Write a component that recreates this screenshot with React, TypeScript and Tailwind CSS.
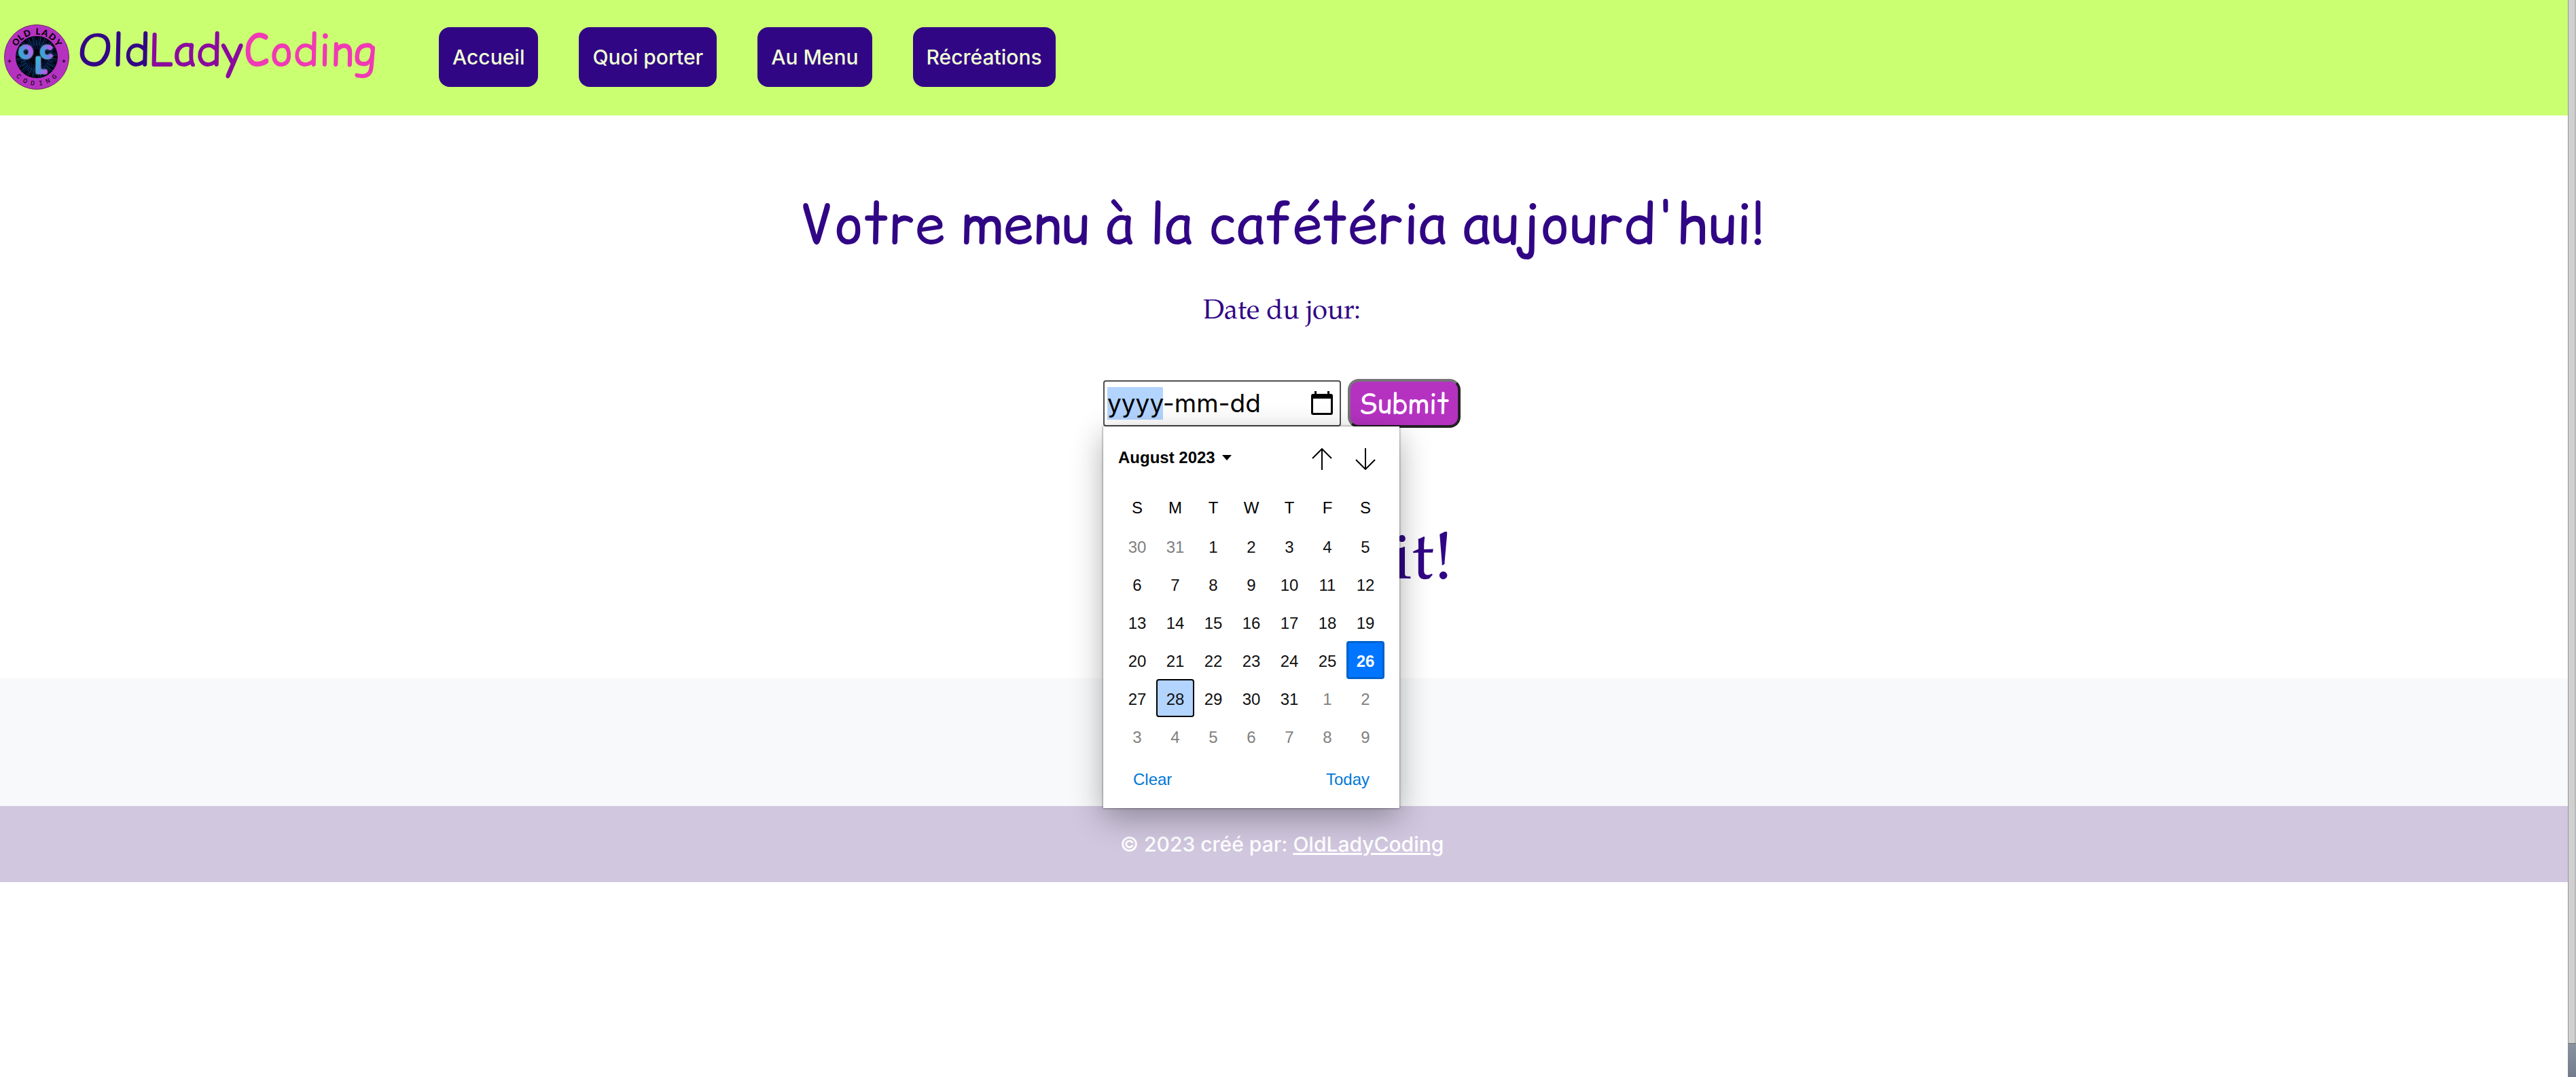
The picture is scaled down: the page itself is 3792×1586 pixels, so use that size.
import { useEffect, useRef } from "react";

const navItems = ["Accueil", "Quoi porter", "Au Menu", "Récréations"];
const weekdays = ["S", "M", "T", "W", "T", "F", "S"];
const weeks = [
  [30, 31, 1, 2, 3, 4, 5],
  [6, 7, 8, 9, 10, 11, 12],
  [13, 14, 15, 16, 17, 18, 19],
  [20, 21, 22, 23, 24, 25, 26],
  [27, 28, 29, 30, 31, 1, 2],
  [3, 4, 5, 6, 7, 8, 9],
];
const rays = Array.from({ length: 60 }, (_, i) => i * 6);

// Glyph origins for text set round the badge: one angle (from vertical) and half-width per letter.
function ring(angles: number[], halfWidths: number[], radius: number, bottom: boolean) {
  const points = angles.map((deg, i) => {
    const a = (deg * Math.PI) / 180;
    const side = bottom ? -1 : 1;
    const rot = bottom ? -a : a;
    return {
      x: 48 + radius * Math.sin(a) - halfWidths[i] * Math.cos(rot),
      y: 48 - side * radius * Math.cos(a) - halfWidths[i] * Math.sin(rot),
      r: bottom ? -deg : deg,
    };
  });
  return {
    x: points.map((p) => p.x.toFixed(2)).join(" "),
    y: points.map((p) => p.y.toFixed(2)).join(" "),
    rotate: points.map((p) => p.r).join(" "),
  };
}

const topRing = ring([-54, -38, -22, -9, 4, 20, 38, 56], [5, 4, 5, 2, 4, 5, 5, 4], 33, false);
const bottomRing = ring([-43, -26, -9, 9, 25, 42], [3, 3, 3, 3, 3, 3], 42, true);

function Logo() {
  return (
    <svg viewBox="0 0 96 96" className="size-24 shrink-0" aria-hidden="true">
      <defs>
        <linearGradient id="neon" x1="0" y1="0.800" x2="1" y2="0.200">
          <stop offset="0" stopColor="#22b4d4" />
          <stop offset="0.450" stopColor="#5a8fe0" />
          <stop offset="1" stopColor="#e04af5" />
        </linearGradient>
        <linearGradient id="neonL" x1="0" y1="0" x2="1" y2="1">
          <stop offset="0" stopColor="#2cc3d6" />
          <stop offset="0.500" stopColor="#4d9be0" />
          <stop offset="1" stopColor="#e23df2" />
        </linearGradient>
      </defs>
      <circle cx="48" cy="48" r="47.500" fill="#b532c1" stroke="#6d2b63" strokeWidth="1" />
      <circle cx="48" cy="48" r="31" fill="#02040f" />
      {rays.map((a, i) => (
        <line
          key={a}
          x1="48"
          y1={i % 2 ? 36 : 31}
          x2="48"
          y2={i % 3 ? 18 : 23}
          stroke={i % 2 ? "#0a2766" : "#104a7c"}
          strokeWidth="1"
          transform={`rotate(${a} 48 48)`}
        />
      ))}
      <text fontFamily="Lato, sans-serif" fontWeight="900" fontSize="13" fill="#000" {...topRing}>
        OLD LADY
      </text>
      <text fontFamily="Liberation Mono, monospace" fontSize="10" fill="#000" {...bottomRing}>
        CODING
      </text>
      <path d="M8 51.500v5M5.500 54h5M88 51.500v5M85.500 54h5" stroke="#000" strokeWidth="1" />
      <g
        fontFamily="Lato, sans-serif"
        textAnchor="middle"
        strokeLinejoin="round"
        strokeWidth="4"
        className="[filter:drop-shadow(0_0_1px_#c3cde2)]"
      >
        <g stroke="url(#neon)" fontSize="24" fill="url(#neon)">
          <text x="32" y="49">O</text>
          <text x="62" y="49">C</text>
        </g>
        <text x="54" y="71" fontSize="31" stroke="url(#neonL)" fill="url(#neonL)">L</text>
      </g>
    </svg>
  );
}

function Arrow({ down = false }: { down?: boolean }) {
  return (
    <svg viewBox="0 0 32 32" className={down ? "size-8 rotate-180" : "size-8"} fill="none" stroke="#000" strokeWidth="2">
      <path d="M16 32V1M2 15 16 1l14 14" />
    </svg>
  );
}

function dayClass(week: number, day: number) {
  if (week === 3 && day === 26)
    return "size-14 rounded-sm border-3 border-[#0062cc] bg-[#0075ff] pt-1 font-bold text-white";
  if (week === 4 && day === 28)
    return "size-14 rounded-sm border-2 border-black bg-[#b3d4ff] pt-1 text-[#101010]";
  const outside = (week === 0 && day > 7) || (week > 3 && day < 10);
  return outside ? "size-14 pt-1 text-[#808080]" : "size-14 pt-1 text-[#101010]";
}

function Calendar() {
  return (
    <div
      role="dialog"
      aria-label="Calendrier"
      className="absolute top-full left-0 z-10 w-[436px] bg-white px-[22px] pb-1.5 font-['Liberation_Sans',Arial,sans-serif] text-2xl text-[#101010] shadow-[0_0_3px_rgba(0,0,0,0.6),0_14px_44px_rgba(0,0,0,0.32)]"
    >
      <div className="flex h-[92px] items-center justify-between">
        <button type="button" className="flex items-center gap-2.5 font-bold text-black">
          August 2023
          <svg viewBox="0 0 14 8" className="h-2 w-3.5">
            <path d="M0 0h14L7 8z" />
          </svg>
        </button>
        <div className="flex gap-2 pt-1">
          <button type="button" aria-label="Previous month" className="flex size-14 items-center justify-center">
            <Arrow />
          </button>
          <button type="button" aria-label="Next month" className="flex size-14 items-center justify-center">
            <Arrow down />
          </button>
        </div>
      </div>
      <table className="w-full table-fixed border-collapse text-center">
        <thead>
          <tr className="h-14">
            {weekdays.map((d, i) => (
              <th key={i} scope="col" className="p-0 font-normal text-black">
                {d}
              </th>
            ))}
          </tr>
        </thead>
        <tbody>
          {weeks.map((week, w) => (
            <tr key={w} className="h-14">
              {week.map((day) => (
                <td key={day} className="p-0">
                  <button type="button" className={dayClass(w, day)}>
                    {day}
                  </button>
                </td>
              ))}
            </tr>
          ))}
        </tbody>
      </table>
      <div className="flex h-[72px] items-center justify-between px-[22px] text-[#0078d7]">
        <button type="button">Clear</button>
        <button type="button">Today</button>
      </div>
    </div>
  );
}

export default function App() {
  const dateRef = useRef<HTMLInputElement>(null);

  useEffect(() => {
    dateRef.current?.focus({ preventScroll: true });
    dateRef.current?.setSelectionRange(0, 4);
  }, []);

  return (
    <div className="flex min-h-screen bg-white">
      <div className="min-w-0 flex-1 font-[Inter,sans-serif]">
        <header className="flex h-[170px] items-center bg-[#cbff72] pb-0.5">
          <a href="#" className="flex w-[646px] shrink-0 items-center gap-3 pl-1.5">
            <Logo />
            <span className="mb-5 font-['Comic_Relief','Comic_Neue',Lato,sans-serif] text-[64px] leading-none">
              <span className="text-[#330785]">Old</span>
              <span className="text-[#8a0a9e]">Lady</span>
              <span className="text-[#f03ab4]">Coding</span>
            </span>
          </a>
          <nav className="flex gap-[60px]">
            {navItems.map((item) => (
              <a
                key={item}
                href="#"
                className="flex h-[88px] items-center rounded-2xl bg-[#310685] px-5 text-[30px] font-medium text-[#efffd5]"
              >
                {item}
              </a>
            ))}
          </nav>
        </header>

        <main className="flex flex-col items-center pt-[104px] pr-1.5 pb-[109px] text-[#310685]">
          <h1 className="font-['Comic_Relief','Comic_Neue',Lato,sans-serif] text-[80px] leading-[112px]">
            Votre menu à la cafétéria aujourd'hui!
          </h1>
          <label
            htmlFor="date"
            className="mt-11 font-['TeX_Gyre_Pagella',Palatino,'Liberation_Serif',serif] text-[40px] leading-[60px]"
          >
            Date du jour:
          </label>
          <form className="mt-[68px] flex items-center gap-2.5" onSubmit={(e) => e.preventDefault()}>
            <div className="relative">
              <div className="flex h-[68px] w-[350px] items-center rounded-sm border-2 border-[#4f4f4f] bg-white pr-2.5 pl-1">
                <input
                  ref={dateRef}
                  id="date"
                  type="text"
                  defaultValue="yyyy-mm-dd"
                  className="h-12 min-w-0 flex-1 text-[37px] leading-[48px] text-black outline-none selection:bg-[#b3d4ff] selection:text-black"
                />
                <button type="button" aria-label="Open calendar">
                  <svg viewBox="0 0 32 36" className="h-9 w-8">
                    <path
                      fillRule="evenodd"
                      d="M5 0h3v4h16V0h3v4h2a3 3 0 0 1 3 3v25a3 3 0 0 1-3 3H3a3 3 0 0 1-3-3V7a3 3 0 0 1 3-3h2zM3 11v21h26V11z"
                    />
                  </svg>
                </button>
              </div>
              <Calendar />
            </div>
            <button
              type="submit"
              className="h-[72px] w-[166px] rounded-2xl border-4 border-t-[#767676] border-r-[#222] border-b-[#222] border-l-[#767676] bg-[#b532c1] pt-0.5 font-['Comic_Relief','Comic_Neue',Lato,sans-serif] text-[40px] leading-none text-white"
            >
              Submit
            </button>
          </form>
          <p className="mt-[140px] font-['TeX_Gyre_Pagella',Palatino,'Liberation_Serif',serif] text-[100px] leading-[120px]">
            Bel appétit!
          </p>
        </main>

        <div className="h-[188px] bg-[#f7f9fb]" />

        <footer className="flex h-28 items-center justify-center bg-[#d1c7df] pr-1.5 text-[30px] font-medium text-white">
          <p>
            © 2023 créé par:{" "}
            <a href="#" className="underline">
              OldLadyCoding
            </a>
          </p>
        </footer>
      </div>

      <div className="flex w-3 shrink-0 flex-col">
        <div className="flex-1 border-r-2 border-l border-r-[#b8b8b8] border-l-[#989898] bg-[#d0d0d0]" />
        <div className="h-[50px] border-t border-[#70747c] bg-linear-to-b from-[#8a92a0] to-[#737c8b]" />
      </div>
    </div>
  );
}
